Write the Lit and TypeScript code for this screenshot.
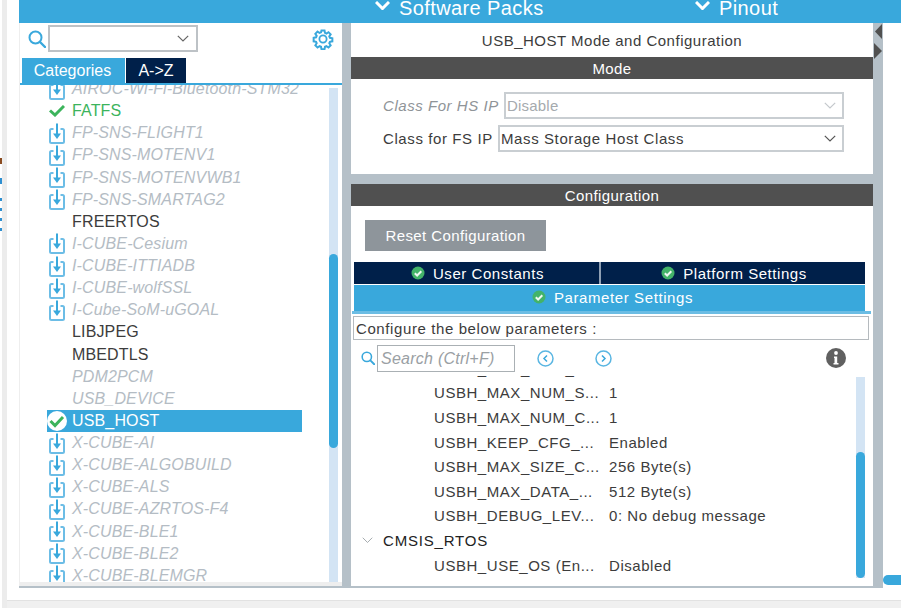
import { LitElement, html, css } from 'lit'
import { customElement } from 'lit/decorators.js'

type Kind = 'pack' | 'plain' | 'off' | 'ok' | 'selected'

const middlewares: [string, Kind][] = [
    ['AIROC-Wi-Fi-Bluetooth-STM32', 'pack'],
    ['FATFS', 'ok'],
    ['FP-SNS-FLIGHT1', 'pack'],
    ['FP-SNS-MOTENV1', 'pack'],
    ['FP-SNS-MOTENVWB1', 'pack'],
    ['FP-SNS-SMARTAG2', 'pack'],
    ['FREERTOS', 'plain'],
    ['I-CUBE-Cesium', 'pack'],
    ['I-CUBE-ITTIADB', 'pack'],
    ['I-CUBE-wolfSSL', 'pack'],
    ['I-Cube-SoM-uGOAL', 'pack'],
    ['LIBJPEG', 'plain'],
    ['MBEDTLS', 'plain'],
    ['PDM2PCM', 'off'],
    ['USB_DEVICE', 'off'],
    ['USB_HOST', 'selected'],
    ['X-CUBE-AI', 'pack'],
    ['X-CUBE-ALGOBUILD', 'pack'],
    ['X-CUBE-ALS', 'pack'],
    ['X-CUBE-AZRTOS-F4', 'pack'],
    ['X-CUBE-BLE1', 'pack'],
    ['X-CUBE-BLE2', 'pack'],
    ['X-CUBE-BLEMGR', 'pack'],
]

const params: [string, string][] = [
    ['USBH_MAX_NUM_E...', '1'],
    ['USBH_MAX_NUM_S...', '1'],
    ['USBH_MAX_NUM_C...', '1'],
    ['USBH_KEEP_CFG_...', 'Enabled'],
    ['USBH_MAX_SIZE_C...', '256 Byte(s)'],
    ['USBH_MAX_DATA_...', '512 Byte(s)'],
    ['USBH_DEBUG_LEV...', '0: No debug message'],
]

const chevron = (size: number, color: string, width = 1.5) => html`
    <svg width=${size} height=${size * 0.6} viewBox="0 0 15 9">
        <path d="M1 1l6.500 6.500L14 1" fill="none" stroke=${color} stroke-width=${width} />
    </svg>
`

const magnifier = (size: number, width: number) => html`
    <svg width=${size} height=${size} viewBox="0 0 18 18">
        <circle cx="7.500" cy="7.500" r="6" fill="none" stroke="#39a8dc" stroke-width=${width} />
        <path d="M12 12l5 5" stroke="#39a8dc" stroke-width=${width + 0.4} stroke-linecap="round" />
    </svg>
`

const packIcon = html`
    <svg width="16" height="21" viewBox="0 0 16 21">
        <path
            d="M4.500 6H2.500A1.500 1.500 0 0 0 1 7.500V18.500A1.500 1.500 0 0 0 2.500 20H13.500A1.500 1.500 0 0 0 15 18.500V7.500A1.500 1.500 0 0 0 13.500 6H11.500"
            fill="none"
            stroke="#6cbde6"
            stroke-width="2"
        />
        <path d="M8 0.500v11" stroke="#39a8dc" stroke-width="2" />
        <path d="M4 10.500L8 16l4-5.500z" fill="#39a8dc" />
    </svg>
`

const okBadge = html`
    <svg width="14" height="14" viewBox="0 0 14 14">
        <circle cx="7" cy="7" r="6.500" fill="#43b369" />
        <path d="M3.800 7.200l2.300 2.300 4.200-4.300" fill="none" stroke="#eef8f2" stroke-width="2" />
    </svg>
`

const gear = html`
    <svg width="22" height="22" viewBox="0 0 22 22">
        <path
            d="M9.300 1.500h3.400l.5 2.700 1.600.7 2.300-1.500 2.400 2.400-1.500 2.300.7 1.600 2.700.5v3.400l-2.700.5-.7 1.600 1.500 2.300-2.400 2.400-2.300-1.500-1.600.7-.5 2.700H9.300l-.5-2.700-1.600-.7-2.300 1.500-2.400-2.400 1.500-2.300-.7-1.600-2.700-.5V9.600l2.700-.5.7-1.600-1.500-2.300 2.400-2.400 2.300 1.500 1.600-.7z"
            transform="translate(1.100 1.100) scale(.9)"
            fill="none"
            stroke="#39a8dc"
            stroke-width="2.200"
        />
        <circle cx="11" cy="11" r="3.600" fill="none" stroke="#39a8dc" stroke-width="1.800" />
    </svg>
`

const navButton = (cls: string, d: string) => html`
    <svg class=${cls} width="17" height="17" viewBox="0 0 17 17">
        <circle cx="8.500" cy="8.500" r="7.500" fill="none" stroke="#5ab6e2" stroke-width="1.500" />
        <path d=${d} fill="none" stroke="#39a8dc" stroke-width="1.500" />
    </svg>
`

@customElement('app-root')
export class AppRoot extends LitElement {
    static styles = css`
        :host {
            display: flex;
            width: 901px;
            height: 608px;
            overflow: hidden;
            background: #fff;
            font-family: 'Liberation Sans', Arial, sans-serif;
            font-size: 15px;
            color: #3c3c3c;
        }

        /* edge of the window behind */
        .edge {
            width: 7px;
            flex: none;
            display: flex;
        }
        .edge-specks {
            width: 2px;
            padding-top: 158px;
            display: flex;
            flex-direction: column;
        }
        .edge-specks i {
            display: block;
            height: 6px;
            margin-bottom: 14px;
            background: #2e8fd0;
        }
        .edge-specks i:first-child {
            background: #8a4b20;
        }
        .edge-specks i:nth-child(n + 3) {
            height: 3px;
            margin-bottom: 7px;
        }
        .edge-line {
            width: 5px;
            background: #ececec;
        }

        .main {
            flex: 1;
            display: flex;
            flex-direction: column;
            min-width: 0;
        }

        .top {
            height: 23px;
            flex: none;
            margin-left: 12px;
            background: #39a8dc;
            color: #fff;
            font-size: 20px;
            display: flex;
            align-items: flex-end;
            overflow: hidden;
            line-height: 29px;
            letter-spacing: 0.4px;
        }
        .top-item {
            display: flex;
            align-items: center;
            gap: 9px;
            white-space: nowrap;
            padding-left: 2px;
        }
        .top-item svg {
            margin-top: -7px;
        }
        .top-packs {
            margin-left: 354px;
            width: 318px;
        }

        .body {
            height: 563px;
            flex: none;
            margin-left: 12px;
            display: flex;
            background: #b5c0c8;
        }

        /* left column */
        .left {
            width: 323px;
            flex: none;
            background: #fff;
            border-left: 1px solid #eee;
            box-sizing: border-box;
            display: flex;
            flex-direction: column;
        }
        .search {
            height: 35px;
            flex: none;
            display: flex;
            align-items: flex-start;
            padding: 2px 0 0 8px;
            box-sizing: border-box;
        }
        .search-icon {
            width: 20px;
            padding-top: 5px;
        }
        .combo {
            width: 150px;
            height: 27px;
            box-sizing: border-box;
            border: 2px solid #bdc2c6;
            display: flex;
            align-items: center;
            justify-content: flex-end;
            padding-right: 7px;
        }
        .gear {
            margin: 3px 0 0 114px;
        }
        .tabs {
            height: 25px;
            flex: none;
            display: flex;
            padding-left: 2px;
            gap: 1px;
            color: #fff;
            font-size: 16px;
            line-height: 25px;
            text-align: center;
        }
        .tab-cat {
            width: 103px;
            padding-right: 2px;
            box-sizing: border-box;
            background: #39a8dc;
        }
        .tab-az {
            width: 60px;
            background: #00204a;
        }
        .tabs-line {
            height: 2px;
            flex: none;
            background: #39a8dc;
        }
        .list-wrap {
            height: 497px;
            flex: none;
            display: flex;
            overflow: hidden;
        }
        .list {
            width: 309px;
            flex: none;
            overflow: hidden;
        }
        .list-inner {
            margin-top: -7px;
        }
        .row {
            height: 22.14px;
            margin-left: 27px;
            width: 255px;
            display: flex;
            align-items: center;
            white-space: nowrap;
            font-size: 16px;
            letter-spacing: 0.15px;
        }
        .row-icon {
            width: 25px;
            flex: none;
            display: flex;
            justify-content: center;
            padding-right: 5px;
            box-sizing: border-box;
            height: 22px;
            align-items: center;
        }
        .row.pack,
        .row.off {
            color: #b4bcc4;
            font-style: italic;
        }
        .row.ok {
            color: #3cb45c;
        }
        .row.selected {
            background: #39a8dc;
            color: #fff;
        }
        .track {
            width: 9px;
            flex: none;
            margin-top: 3px;
            background: #d3e4f4;
        }
        .thumb {
            background: #39a8dc;
            border-radius: 5px;
        }
        .left .thumb {
            margin-top: 166px;
            height: 194px;
        }
        .left-foot {
            height: 4px;
            flex: none;
            background: #eee;
        }

        .sep {
            width: 9px;
            flex: none;
        }

        /* right column */
        .right {
            width: 522px;
            flex: none;
            display: flex;
            flex-direction: column;
            gap: 10px;
        }
        .mode {
            height: 151px;
            flex: none;
            background: #fff;
        }
        .title {
            height: 34px;
            line-height: 36px;
            text-align: center;
            letter-spacing: 0.5px;
        }
        .bar {
            height: 22px;
            line-height: 24px;
            background: #505050;
            color: #fff;
            text-align: center;
            letter-spacing: 0.4px;
        }
        .mode-form {
            padding: 13px 29px 0 32px;
            display: flex;
            flex-direction: column;
            gap: 6px;
        }
        .field {
            display: flex;
            align-items: center;
            justify-content: space-between;
            letter-spacing: 0.6px;
        }
        .field.off {
            color: #8f9498;
            letter-spacing: 0.55px;
        }
        .field.off .label {
            font-style: italic;
        }
        .select {
            height: 27px;
            box-sizing: border-box;
            border: 2px solid #c9ced2;
            display: flex;
            align-items: center;
            justify-content: space-between;
            padding: 0 6px 0 1px;
            width: 346px;
            letter-spacing: 0.6px;
        }
        .field.off .select {
            width: 340px;
            color: #a5aaae;
            padding-left: 1px;
            letter-spacing: 0.2px;
        }

        .config {
            flex: 1;
            background: #fff;
            display: flex;
            flex-direction: column;
            min-height: 0;
        }
        .reset {
            margin: 14px 0 0 14px;
            width: 181px;
            height: 31px;
            line-height: 32px;
            background: #8e959b;
            color: #fff;
            text-align: center;
            letter-spacing: 0.4px;
            flex: none;
        }
        .cfg-tabs {
            margin: 11px 8px 0 3px;
            height: 22px;
            flex: none;
            display: flex;
            background: #00204a;
            color: #fff;
            letter-spacing: 0.55px;
        }
        .cfg-tab {
            display: flex;
            align-items: center;
            justify-content: center;
            gap: 8px;
            box-sizing: border-box;
        }
        .cfg-tab.user {
            width: 247px;
            padding-left: 2px;
            border-right: 2px solid #8fa0b4;
        }
        .cfg-tab.platform {
            flex: 1;
            padding-left: 2px;
        }
        .cfg-tab.current {
            height: 26px;
            flex: none;
            margin: 1px 8px 0 3px;
            padding: 0 0 2px 6px;
            background: #39a8dc;
            color: #fff;
            letter-spacing: 0.6px;
        }
        .cfg-line {
            height: 3px;
            flex: none;
            margin: 0 2px 2px 1px;
            background: #6cbde4;
        }
        .note {
            height: 24px;
            flex: none;
            box-sizing: border-box;
            margin: 0 4px 0 2px;
            border: 1px solid #b5babe;
            line-height: 23px;
            padding-left: 2px;
            letter-spacing: 0.6px;
        }
        .finder {
            height: 36px;
            flex: none;
            display: flex;
            align-items: center;
            padding-left: 10px;
        }
        .finder-input {
            width: 138px;
            height: 27px;
            margin-left: 2px;
            box-sizing: border-box;
            border: 1px solid #aab0b4;
            font-style: italic;
            font-size: 16px;
            letter-spacing: 0.25px;
            color: #9aa0a4;
            line-height: 26px;
            padding-left: 3px;
        }
        .finder .prev {
            margin-left: 22px;
        }
        .finder .next {
            margin-left: 41px;
        }
        .finder .info {
            margin-left: 214px;
        }
        .tree-wrap {
            flex: 1;
            display: flex;
            min-height: 0;
            overflow: hidden;
        }
        .tree {
            width: 505px;
            flex: none;
            overflow: hidden;
        }
        .tree-inner {
            margin-top: -20px;
        }
        .param {
            height: 24.6px;
            display: flex;
            align-items: center;
            letter-spacing: 0.55px;
            white-space: nowrap;
        }
        .param-name {
            margin-left: 83px;
            width: 175px;
            flex: none;
        }
        .group {
            height: 24.6px;
            display: flex;
            align-items: center;
            color: #222;
            letter-spacing: 0.8px;
            padding-left: 11px;
            gap: 10px;
        }
        .tree-wrap .track {
            margin: 1px 0 8px;
        }
        .tree-wrap .thumb {
            margin-top: 75px;
            height: 126px;
        }

        .tail {
            flex: 1;
            background: #fff;
            margin-left: 10px;
            display: flex;
            align-items: flex-end;
            padding-bottom: 1px;
        }
        .tail-thumb {
            flex: 1;
            height: 10px;
            background: #39a8dc;
            border-radius: 5px 0 0 5px;
        }
        .handle {
            align-self: flex-start;
            width: 10px;
            margin-left: -10px;
            flex: none;
            display: flex;
            flex-direction: column;
            align-items: center;
            padding-top: 1px;
            gap: 4px;
        }

        .bottom {
            height: 2px;
            flex: none;
            margin-left: 12px;
            background: #b5c0c8;
            margin-right: 18px;
        }
        .page-foot {
            height: 8px;
            flex: none;
            background: #f0f0f0;
            border-top: 1px solid #e2e2e2;
            margin-top: 12px;
            box-sizing: border-box;
        }
    `

    private renderRowIcon(kind: Kind) {
        if (kind === 'pack') return packIcon
        if (kind === 'ok') {
            return html`<svg width="16" height="12" viewBox="0 0 16 12">
                <path d="M1 5.500l5 4.500 9-9" fill="none" stroke="#3cb45c" stroke-width="3" />
            </svg>`
        }
        if (kind === 'selected') {
            return html`<svg width="20" height="20" viewBox="0 0 20 20">
                <circle cx="10" cy="10" r="10" fill="#fff" />
                <path d="M3.500 10l4.500 4.500 8-8.500" fill="none" stroke="#3cb45c" stroke-width="3" />
            </svg>`
        }
        return null
    }

    render() {
        return html`
            <div class="edge">
                <div class="edge-specks"><i></i><i></i><i></i><i></i><i></i><i></i></div>
                <div class="edge-line"></div>
            </div>
            <div class="main">
                <div class="top">
                    <div class="top-item top-packs">${chevron(15, '#fff', 3)}<span>Software Packs</span></div>
                    <div class="top-item">${chevron(15, '#fff', 3)}<span>Pinout</span></div>
                </div>
                <div class="body">
                    <div class="left">
                        <div class="search">
                            <div class="search-icon">${magnifier(18, 2)}</div>
                            <div class="combo">${chevron(12, '#666')}</div>
                            <div class="gear">${gear}</div>
                        </div>
                        <div class="tabs">
                            <div class="tab-cat">Categories</div>
                            <div class="tab-az">A-&gt;Z</div>
                        </div>
                        <div class="tabs-line"></div>
                        <div class="list-wrap">
                            <div class="list">
                                <div class="list-inner">
                                    ${middlewares.map(
                                        ([name, kind]) => html`
                                            <div class="row ${kind}">
                                                <span class="row-icon">${this.renderRowIcon(kind)}</span>
                                                <span>${name}</span>
                                            </div>
                                        `,
                                    )}
                                </div>
                            </div>
                            <div class="track"><div class="thumb"></div></div>
                        </div>
                        <div class="left-foot"></div>
                    </div>
                    <div class="sep"></div>
                    <div class="right">
                        <div class="mode">
                            <div class="title">USB_HOST Mode and Configuration</div>
                            <div class="bar">Mode</div>
                            <div class="mode-form">
                                <div class="field off">
                                    <span class="label">Class For HS IP</span>
                                    <div class="select"><span>Disable</span>${chevron(12, '#c4c8cc')}</div>
                                </div>
                                <div class="field">
                                    <span class="label">Class for FS IP</span>
                                    <div class="select"><span>Mass Storage Host Class</span>${chevron(12, '#555')}</div>
                                </div>
                            </div>
                        </div>
                        <div class="config">
                            <div class="bar">Configuration</div>
                            <div class="reset">Reset Configuration</div>
                            <div class="cfg-tabs">
                                <div class="cfg-tab user">${okBadge}<span>User Constants</span></div>
                                <div class="cfg-tab platform">${okBadge}<span>Platform Settings</span></div>
                            </div>
                            <div class="cfg-tab current">${okBadge}<span>Parameter Settings</span></div>
                            <div class="cfg-line"></div>
                            <div class="note">Configure the below parameters :</div>
                            <div class="finder">
                                ${magnifier(14, 2)}
                                <div class="finder-input">Search (Ctrl+F)</div>
                                ${navButton('prev', 'M10 5.500l-3 3 3 3')}
                                ${navButton('next', 'M7 5.500l3 3-3 3')}
                                <svg class="info" width="20" height="20" viewBox="0 0 20 20">
                                    <circle cx="10" cy="10" r="10" fill="#606060" />
                                    <circle cx="10" cy="5" r="1.900" fill="#fff" />
                                    <path d="M8 8.500h3.200V15H12.500v1.500h-5V15h1V10H8z" fill="#fff" />
                                </svg>
                            </div>
                            <div class="tree-wrap">
                                <div class="tree">
                                    <div class="tree-inner">
                                        ${params.map(
                                            ([name, value]) => html`
                                                <div class="param">
                                                    <span class="param-name">${name}</span><span>${value}</span>
                                                </div>
                                            `,
                                        )}
                                        <div class="group">${chevron(11, '#9aa0a4', 1.2)}<span>CMSIS_RTOS</span></div>
                                        <div class="param">
                                            <span class="param-name">USBH_USE_OS (En...</span><span>Disabled</span>
                                        </div>
                                    </div>
                                </div>
                                <div class="track"><div class="thumb"></div></div>
                            </div>
                        </div>
                    </div>
                    <div class="tail">
                        <div class="handle">
                            <svg width="7" height="15" viewBox="0 0 7 15"><path d="M7 0v15L0 7.500z" fill="#505050" /></svg>
                            <svg width="8" height="16" viewBox="0 0 8 16"><path d="M0 0v16l8-8z" fill="#505050" /></svg>
                        </div>
                        <div class="tail-thumb"></div>
                    </div>
                </div>
                <div class="bottom"></div>
                <div class="page-foot"></div>
            </div>
        `
    }
}
